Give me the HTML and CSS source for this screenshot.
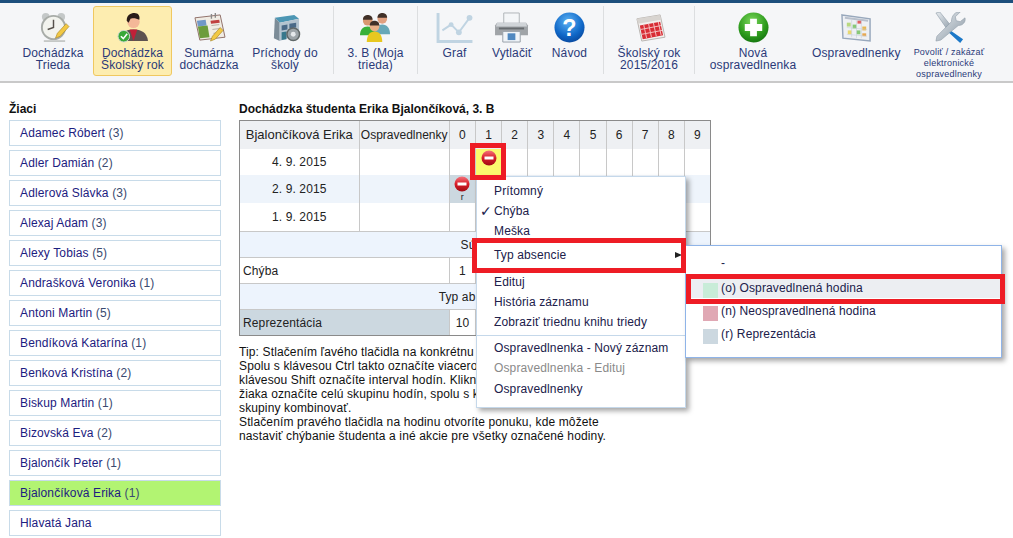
FILE: index.html
```html
<!DOCTYPE html>
<html lang="sk">
<head>
    <meta charset="UTF-8">
    <title>Dochádzka študenta</title>
    <link rel="stylesheet" href="styles.css">
</head>
<body>
    <svg class="defs" width="0" height="0">
        <defs>
            <linearGradient id="redball" x1="0" y1="0" x2="0" y2="1"><stop offset="0" stop-color="#f4747c"/><stop offset=".5" stop-color="#d81c28"/><stop offset="1" stop-color="#a00c14"/></linearGradient>
            <radialGradient id="blueball" cx=".45" cy=".3" r=".8"><stop offset="0" stop-color="#5cb2f4"/><stop offset=".6" stop-color="#1068c8"/><stop offset="1" stop-color="#063e90"/></radialGradient>
            <radialGradient id="greenball" cx=".45" cy=".3" r=".8"><stop offset="0" stop-color="#7cd85c"/><stop offset=".6" stop-color="#2c9a1c"/><stop offset="1" stop-color="#0e6a0c"/></radialGradient>
            <linearGradient id="steel" x1="0" y1="0" x2="1" y2="1"><stop offset="0" stop-color="#e8ecf0"/><stop offset="1" stop-color="#8a98a4"/></linearGradient>
            <symbol id="minus" viewBox="0 0 16 16">
                <circle cx="8" cy="8" r="7.5" fill="url(#redball)"/>
                <rect x="3.500" y="6.500" width="9" height="3" fill="#fff"/>
            </symbol>
        </defs>
    </svg>

    <header class="toolbar">
        <a class="tool w80">
            <svg class="icon" viewBox="0 0 36 32">
                <circle cx="10" cy="5" r="4" fill="#c4c8c8"/><circle cx="26" cy="5" r="4" fill="#c4c8c8"/>
                <circle cx="18" cy="16" r="12" fill="#f2f3ee" stroke="#a8aca8" stroke-width="2"/>
                <path d="M18 8v8l-6 2" fill="none" stroke="#55504a" stroke-width="1.5"/>
                <path d="M8 30h22" stroke="#b8bcb8" stroke-width="1.5"/>
                <path d="M20 27l2-5 9-10 3 3-9 10z" fill="#f2c844" stroke="#a08020" stroke-width=".6"/>
            </svg>
            <span>Dochádzka<br>Trieda</span>
        </a>
        <a class="tool w79 active">
            <svg class="icon" viewBox="0 0 36 32">
                <path d="M5 30c1-9 6-12 14-12s14 3 15 12z" fill="#5e5250"/>
                <path d="M15 18l4 12 4-12z" fill="#c02038"/>
                <circle cx="19" cy="10" r="6.500" fill="#f4b898"/>
                <path d="M12 9c0-6 4-8 8-8s6 3 5 7c-3-2-8-2-9-1l-2 4z" fill="#2a1c18"/>
                <circle cx="9" cy="25" r="6" fill="#38a838" stroke="#d0d8d0"/>
                <path d="M6 25l2.500 2.500 4-5" fill="none" stroke="#fff" stroke-width="1.6"/>
            </svg>
            <span>Dochádzka<br>Školský rok</span>
        </a>
        <a class="tool w74">
            <svg class="icon" viewBox="0 0 36 32">
                <path d="M3 6l26-3 5 23-26 3z" fill="#f0ece4" stroke="#907068" stroke-width="1"/>
                <path d="M5 9l9-1 1 6-9 1z" fill="#7098c8"/><path d="M6 15l10-1 2 12-10 1z" fill="#6c9c3c"/>
                <path d="M19 9l9-1 .6 3-9 1z" fill="#c04040"/>
                <path d="M20 14l8-1M21 18l8-1M22 22l8-1" stroke="#b8b0a4"/>
                <path d="M20 2v5M24 1v5" stroke="#888" stroke-width="1.4"/>
                <path d="M19 30l2-5 8-9 3 3-8 9z" fill="#f2c844" stroke="#a08020" stroke-width=".6"/>
            </svg>
            <span>Sumárna<br>dochádzka</span>
        </a>
        <a class="tool w78">
            <svg class="icon" viewBox="0 0 36 32">
                <path d="M7 6l20-3 5 4-20 4z" fill="#4c96b4"/>
                <path d="M7 6l5 5v19l-6-3z" fill="#7c8c98"/>
                <path d="M12 11l20-4v16l-20 7z" fill="#b4c4d0"/>
                <path d="M14 14l6-1v5l-6 1zM22 12l7-1v5l-7 1z" fill="#4a6a88"/>
                <path d="M14 21l5-1v8l-5 1z" fill="#38788c"/>
                <circle cx="26" cy="23" r="6.500" fill="#9ca4a8" stroke="#606868" stroke-width="1.5"/>
                <circle cx="26" cy="23" r="2.500" fill="#e4e8ea"/>
            </svg>
            <span>Príchody do<br>školy</span>
        </a>
        <i class="sep s1"></i>
        <a class="tool w83">
            <svg class="icon" viewBox="0 0 36 32">
                <circle cx="10" cy="9" r="5" fill="#d89870"/><path d="M5 8c0-4 3-5 5-5s5 1 5 5z" fill="#403028"/>
                <path d="M2 24c0-6 3-9 8-9s8 3 8 9z" fill="#38b038"/>
                <circle cx="25" cy="7" r="5" fill="#e0a080"/><path d="M20 6c0-4 3-5 5-5s5 1 5 5z" fill="#403028"/>
                <path d="M17 23c0-6 3-10 8-10s8 4 8 10z" fill="#68a8b8"/>
                <circle cx="17" cy="15" r="5" fill="#e8b088"/><path d="M12 14c0-4 3-5 5-5s5 1 5 5z" fill="#403028"/>
                <path d="M9 31c0-7 3-11 8-11s8 4 8 11z" fill="#e8c820"/>
            </svg>
            <span>3. B (Moja<br>trieda)</span>
        </a>
        <i class="sep"></i>
        <a class="tool w73">
            <svg class="icon graph" viewBox="0 0 38 32">
                <path d="M1.500 1v29.500H37" fill="none" stroke="#c0d4e2" stroke-width="3"/>
                <path d="M6 19l9-6 8 8 11-15" fill="none" stroke="#c0d4e2" stroke-width="2"/>
                <circle cx="15" cy="13" r="2.500" fill="#c0d4e2"/><circle cx="23" cy="21" r="3" fill="#c0d4e2"/><circle cx="34" cy="6" r="3" fill="#c0d4e2"/>
            </svg>
            <span>Graf</span>
        </a>
        <a class="tool w41">
            <svg class="icon" viewBox="0 0 36 32">
                <path d="M10 1h16v11H10z" fill="#f4f6f8" stroke="#b0b4b8"/>
                <path d="M3 11h30l2 3v10H1V14z" fill="#a0a4a8"/><path d="M3 11h30l1 4H2z" fill="#d0d4d8"/>
                <rect x="5" y="16" width="26" height="2" fill="#686c70"/>
                <path d="M9 20h18v11H9z" fill="#f0f4f8" stroke="#98a0a8"/><path d="M14 22h8v7h-8z" fill="#5088c0"/>
            </svg>
            <span>Vytlačiť</span>
        </a>
        <a class="tool w67">
            <svg class="icon" viewBox="0 0 32 32">
                <circle cx="16" cy="16" r="15.500" fill="url(#blueball)"/>
                <text x="16" y="25" class="help-mark">?</text>
            </svg>
            <span>Návod</span>
        </a>
        <i class="sep"></i>
        <a class="tool w90">
            <svg class="icon" viewBox="0 0 36 32">
                <path d="M5 7l24-4 5 23-24 4z" fill="#f2f0ee" stroke="#b8b4b0"/>
                <path d="M5 7l24-4 1 5-24 4z" fill="#d8d4d0"/>
                <path d="M8 14l21-4 3 14-21 4z" fill="#d82c34"/>
                <path d="M12 13l3 14M17 12l3 14M22 11l3 14M27 10l3 14M9 18l21-4M10 23l21-4" stroke="#f4c0c0"/>
            </svg>
            <span>Školský rok<br>2015/2016</span>
        </a>
        <i class="sep"></i>
        <a class="tool w116">
            <svg class="icon" viewBox="0 0 32 32">
                <circle cx="16" cy="16" r="15.500" fill="url(#greenball)"/>
                <path d="M12.500 7h7v5.500H25v7h-5.500V25h-7v-5.500H7v-7h5.500z" fill="#fff"/>
            </svg>
            <span>Nová<br>ospravedlnenka</span>
        </a>
        <a class="tool w90">
            <svg class="icon" viewBox="0 0 34 32">
                <path d="M2 3l29 4v23L3 27z" fill="#eef0f4" stroke="#98a8bc" stroke-width="1.500"/>
                <path d="M5 6l24 3" stroke="#b8c0cc" stroke-width="2"/>
                <path d="M7 11h4v4H7z" fill="#b8d880"/><path d="M13 13h4v4h-4z" fill="#88c878"/><path d="M18 9h4v3h-4z" fill="#e06060"/>
                <path d="M23 15h4v4h-4z" fill="#e8b850"/><path d="M8 19h4v4H8z" fill="#e8d870"/><path d="M17 19h4v4h-4z" fill="#88c878"/><path d="M23 22h4v3h-4z" fill="#e8a850"/>
                <path d="M7 16l21 2M7 23l21 2M12 8v18M17 9v18M22 9v18" stroke="#c8d0d8" stroke-width=".6"/>
            </svg>
            <span>Ospravedlnenky</span>
        </a>
        <a class="tool w96 small">
            <svg class="icon" viewBox="0 0 32 32">
                <path d="M2 1l4-1 13 16-4 4z" fill="url(#steel)" stroke="#8a98a4" stroke-width=".6"/>
                <path d="M13 15l4 4 13 9-3 4-14-13z" fill="#1c78c8"/>
                <path d="M27 0l-5 5 1 4 4 1 5-4c1 4-2 8-7 8L7 29l-5 1 1-5 15-15c0-6 4-11 9-10z" fill="url(#steel)" stroke="#8a98a4" stroke-width=".6"/>
            </svg>
            <span>Povoliť / zakázať<br>elektronické<br>ospravedlnenky</span>
        </a>
    </header>

    <div class="main">
        <aside class="students">
            <h3>Žiaci</h3>
            <a class="student">Adamec Róbert <em>(3)</em></a>
            <a class="student">Adler Damián <em>(2)</em></a>
            <a class="student">Adlerová Slávka <em>(3)</em></a>
            <a class="student">Alexaj Adam <em>(3)</em></a>
            <a class="student">Alexy Tobias <em>(5)</em></a>
            <a class="student">Andrašková Veronika <em>(1)</em></a>
            <a class="student">Antoni Martin <em>(5)</em></a>
            <a class="student">Bendíková Katarína <em>(1)</em></a>
            <a class="student">Benková Kristína <em>(2)</em></a>
            <a class="student">Biskup Martin <em>(1)</em></a>
            <a class="student">Bizovská Eva <em>(2)</em></a>
            <a class="student">Bjalončík Peter <em>(1)</em></a>
            <a class="student selected">Bjalončíková Erika <em>(1)</em></a>
            <a class="student">Hlavatá Jana</a>
        </aside>

        <section class="detail">
            <h3>Dochádzka študenta Erika Bjalončíková, 3. B</h3>
            <table class="attendance">
                <colgroup>
                    <col class="c-name"><col class="c-exc">
                    <col span="10" class="c-hour">
                </colgroup>
                <tr class="head">
                    <th class="big">Bjalončíková Erika</th><th>Ospravedlnenky</th>
                    <th>0</th><th>1</th><th>2</th><th>3</th><th>4</th><th>5</th><th>6</th><th>7</th><th>8</th><th>9</th>
                </tr>
                <tr class="day">
                    <td>4. 9. 2015</td><td></td><td></td>
                    <td class="marked"><svg class="mark"><use href="#minus"/></svg></td>
                    <td></td><td></td><td></td><td></td><td></td><td></td><td></td><td></td>
                </tr>
                <tr class="day tall alt">
                    <td>2. 9. 2015</td><td></td>
                    <td class="rep"><svg class="mark"><use href="#minus"/></svg><b>r</b></td>
                    <td></td><td></td><td></td><td></td><td></td><td></td><td></td><td></td><td></td>
                </tr>
                <tr class="day last">
                    <td>1. 9. 2015</td><td></td><td></td>
                    <td></td><td></td><td></td><td></td><td></td><td></td><td></td><td></td><td></td>
                </tr>
                <tr class="band"><td colspan="3">Sú</td><td colspan="9"></td></tr>
                <tr class="sum"><td colspan="2" class="left">Chýba</td><td>1</td><td colspan="9"></td></tr>
                <tr class="band"><td colspan="3">Typ ab</td><td colspan="9"></td></tr>
                <tr class="sum"><td colspan="2" class="left repname">Reprezentácia</td><td>10</td><td colspan="9"></td></tr>
            </table>
            <p class="tip">
                Tip: Stlačením ľavého tlačidla na konkrétnu<br>
                Spolu s klávesou Ctrl takto označíte viacero<br>
                klávesou Shift označíte interval hodín. Kliknu<br>
                žiaka označíte celú skupinu hodín, spolu s k<br>
                skupiny kombinovať.<br>
                Stlačením pravého tlačidla na hodinu otvoríte ponuku, kde môžete<br>
                nastaviť chýbanie študenta a iné akcie pre všetky označené hodiny.
            </p>
        </section>
    </div>

    <ul class="menu">
        <li>Prítomný</li>
        <li class="check">Chýba</li>
        <li>Meška</li>
        <li class="sub">Typ absencie</li>
        <li>Edituj</li>
        <li>História záznamu</li>
        <li>Zobraziť triednu knihu triedy</li>
        <li class="line">Ospravedlnenka - Nový záznam</li>
        <li class="off">Ospravedlnenka - Edituj</li>
        <li class="end">Ospravedlnenky</li>
    </ul>

    <ul class="submenu">
        <li>-</li>
        <li class="hover"><i class="sw green"></i>(o) Ospravedlnená hodina</li>
        <li><i class="sw pink"></i>(n) Neospravedlnená hodina</li>
        <li><i class="sw grey"></i>(r) Reprezentácia</li>
    </ul>

    <div class="redbox box-cell"></div>
    <div class="redbox box-type"></div>
    <div class="redbox box-excused"></div>
</body>
</html>
```

FILE: styles.css
```css
html, body {
    margin: 0;
    padding: 0;
    height: 538px;
    overflow: hidden;
}
body {
    position: relative;
    font-family: "Liberation Sans", Arial, sans-serif;
    font-size: 12px;
    letter-spacing: .13px;
    color: #111;
    background: #fff;
}
.defs {
    position: absolute;
}

/* toolbar */
.toolbar {
    display: flex;
    align-items: flex-start;
    height: 75px;
    padding: 3px 0 0 13px;
    background: #f5f6f8;
    border-top: 3px solid #1d4f7c;
    border-bottom: 2px solid #c9c9c9;
}
.tool {
    flex: none;
    box-sizing: border-box;
    height: 70px;
    padding-top: 5px;
    text-align: center;
    line-height: 12px;
    color: #2b3a78;
    border: 1px solid transparent;
    border-radius: 3px;
}
.tool span {
    display: block;
    margin-top: 4px;
}
.tool .icon {
    display: block;
    width: 35px;
    height: 31px;
    margin: 0 auto;
}
.tool .graph {
    width: 38px;
}
.tool.active {
    background: #fdedb0;
    border-color: #f0c860;
}
.tool.small {
    font-size: 9px;
    letter-spacing: .2px;
    line-height: 11px;
}
.tool.small span {
    margin-top: 4px;
}
.help-mark {
    font: bold 24px "Liberation Sans", Arial, sans-serif;
    fill: #fff;
    text-anchor: middle;
}
.w41 { width: 41px; margin-right: 4px; }
.w67 { width: 67px; }
.w73 { width: 73px; }
.w74 { width: 74px; }
.w78 { width: 78px; }
.w79 { width: 79px; }
.w80 { width: 80px; }
.w83 { width: 83px; }
.w90 { width: 90px; }
.w96 { width: 96px; }
.w116 { width: 116px; }
.sep {
    flex: none;
    width: 1px;
    height: 68px;
    background: #dcdee0;
}
.s1 {
    margin-left: 9px;
}

/* page body */
.main {
    display: flex;
    padding: 19px 0 0 9px;
}
h3 {
    margin: 0;
    font-size: 12px;
    letter-spacing: 0;
    line-height: 14px;
}
.students {
    flex: none;
    width: 212px;
    margin-right: 18px;
}
.students h3 {
    margin-bottom: 4px;
}
.student {
    display: block;
    box-sizing: border-box;
    height: 26px;
    margin-bottom: 4px;
    padding-left: 10px;
    line-height: 24px;
    color: #1c2080;
    border: 1px solid #c8dbe9;
}
.student em {
    font-style: normal;
    color: #3a4a70;
}
.student.selected {
    background: #b2f472;
}

.detail {
    flex: none;
    width: 472px;
}
.detail h3 {
    margin-bottom: 4px;
}
.attendance {
    width: 472px;
    table-layout: fixed;
    border-collapse: collapse;
    outline: 1px solid #8a8a8a;
    outline-offset: -1px;
    text-align: center;
    color: #222;
}
.c-name { width: 119px; }
.c-exc { width: 90px; }
.c-hour { width: 26px; }
.attendance th, .attendance td {
    padding: 0;
    border: 1px solid #c8c8c8;
    font-weight: normal;
}
.attendance th {
    letter-spacing: 0;
    border-bottom: 0;
}
.attendance tr {
    height: 26px;
}
.head {
    background: #eef0f3;
}
.attendance tr.head, .attendance tr.tall {
    height: 28px;
}
.attendance tr.last {
    height: 29px;
}
.attendance .day td {
    border-top: 0;
    border-bottom: 0;
}
.big {
    font-size: 13px;
}
.attendance .alt {
    background: #eef4fb;
}
.attendance td.marked {
    background: #fbf96e;
    vertical-align: top;
}
.attendance td.rep {
    background: #ccd8e0;
    vertical-align: top;
}
.mark {
    display: block;
    width: 16px;
    height: 16px;
    margin: 1px auto 0;
}
.rep b {
    display: block;
    font-size: 9px;
    font-weight: normal;
    line-height: 11px;
}
.band td {
    background: #edf4fd;
    border-left: 0;
    border-right: 0;
}
.band td:first-child {
    text-align: right;
}
.attendance td.left {
    padding-left: 3px;
    text-align: left;
}
.attendance td.repname {
    background: #ccd8e0;
}
.tip {
    margin: 9px 0 0;
    width: 470px;
    line-height: 14px;
    white-space: nowrap;
    color: #111;
}

/* popup menus */
.menu, .submenu {
    position: absolute;
    box-sizing: border-box;
    margin: 0;
    padding: 0;
    list-style: none;
    background: #fff;
    box-shadow: 3px 3px 5px rgba(0, 0, 0, .35);
    color: #20204a;
}
.menu {
    left: 476px;
    top: 176px;
    width: 210px;
    height: 232px;
    padding-top: 4px;
    border: 1px solid #c5d8ea;
}
.menu li {
    position: relative;
    height: 20px;
    padding-left: 17px;
    line-height: 20px;
    white-space: nowrap;
}
.menu .check::before {
    content: "✓";
    position: absolute;
    left: 3px;
    font-family: "DejaVu Sans", sans-serif;
    font-size: 14px;
    font-weight: bold;
}
.menu .sub {
    height: 27px;
    margin-top: 4px;
}
.menu .sub::after {
    content: "";
    position: absolute;
    right: 3px;
    top: 7px;
    border-left: 7px solid #222;
    border-top: 3px solid transparent;
    border-bottom: 3px solid transparent;
}
.menu .line {
    margin-top: 3px;
    padding-top: 2px;
    border-top: 1px solid #c5d8ea;
}
.menu .off {
    color: #8a8a8a;
}
.menu .end {
    margin-top: 1px;
}
.submenu {
    left: 685px;
    top: 245px;
    width: 317px;
    height: 113px;
    padding-top: 4px;
    border: 1px solid #8fb4e8;
}
.submenu li {
    display: flex;
    align-items: flex-start;
    box-sizing: border-box;
    height: 23px;
    padding: 2px 0 0 35px;
    line-height: 23px;
}
.submenu li:first-child {
    height: 25px;
}
.submenu .hover {
    background: #eceef2;
}
.sw {
    flex: none;
    width: 15px;
    height: 15px;
    margin: 6px 3px 0 -18px;
}
.sw.green { background: #c8ecd8; }
.sw.pink { background: #e0a8b4; }
.sw.grey { background: #ccd8e0; }

/* red annotation frames */
.redbox {
    position: absolute;
    box-sizing: border-box;
    border: 5px solid #ee1c25;
}
.box-cell {
    left: 470px;
    top: 143px;
    width: 36px;
    height: 37px;
}
.box-type {
    left: 472px;
    top: 238px;
    width: 214px;
    height: 35px;
}
.box-excused {
    left: 686px;
    top: 274px;
    width: 319px;
    height: 30px;
}
```
